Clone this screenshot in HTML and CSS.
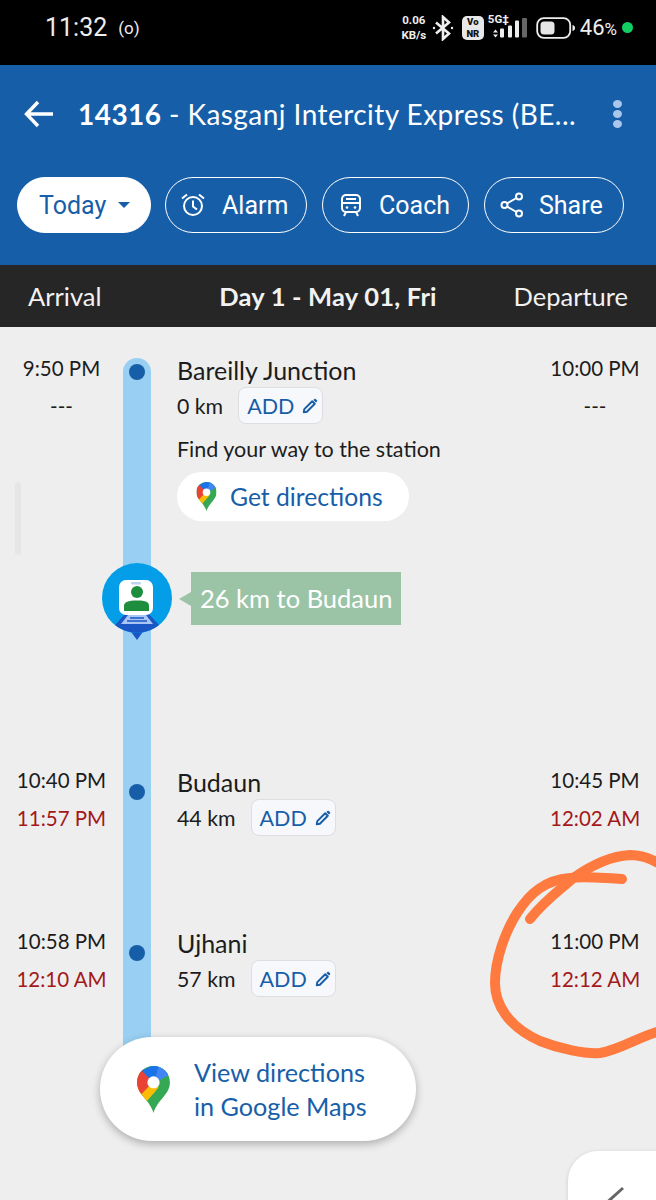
FILE: index.html
```html
<!DOCTYPE html>
<html lang="en">
<head>
  <meta charset="UTF-8">
  <meta name="viewport" content="width=device-width, initial-scale=1.0">
  <title>Train Running Status</title>
  <link rel="stylesheet" href="styles.css">
</head>
<body>

<svg class="defs" width="0" height="0">
  <defs>
    <clipPath id="pinClip">
      <path d="M35 0C15 0 0 15 0 35C0 47 6 56 14 66C23 77 31 86 35 100C39 86 47 77 56 66C64 56 70 47 70 35C70 15 55 0 35 0Z"/>
    </clipPath>
    <symbol id="mapsPin" viewBox="0 0 70 100">
      <g clip-path="url(#pinClip)">
        <rect width="70" height="100" fill="#34a853"/>
        <polygon points="0,50 24,24 46,46 18,78 0,78" fill="#fbbc04"/>
        <polygon points="0,0 14,8 34,34 9,60 0,50" fill="#ea4335"/>
        <polygon points="10,10 30,0 50,0 35,35" fill="#1a73e8"/>
        <polygon points="36,36 46,0 70,0 70,18" fill="#4285f4"/>
      </g>
      <circle cx="35" cy="35" r="13" fill="#fff"/>
    </symbol>
    <symbol id="pencil" viewBox="0 0 18 18">
      <path d="M2 16L2.600 12.500L11.500 3.600L14.400 6.500L5.500 15.400Z" fill="none" stroke="#175ea8" stroke-width="2.200" stroke-linejoin="round"/>
      <path d="M12.800 2.300L14 1.100C14.400 .7 15 .7 15.400 1.100L16.900 2.600C17.300 3 17.300 3.600 16.900 4L15.700 5.200Z" fill="#175ea8"/>
    </symbol>
  </defs>
</svg>

<!-- Status bar -->
<div class="status-bar">
  <div class="status-left">
    <span class="clock">11:32</span>
    <span class="hotspot">(o)</span>
  </div>
  <div class="status-right">
    <span class="net-speed">0.06<br>KB/s</span>
    <svg class="ic-bt" width="22" height="26" viewBox="0 0 22 26" fill="none" stroke="#eee" stroke-width="2.6">
      <path d="M4 7.500L17 18.500L11 24V2L17 7.500L4 18.500"/>
      <circle cx="2" cy="13" r="1.200" fill="#eee" stroke="none"/>
      <circle cx="20" cy="13" r="1.200" fill="#eee" stroke="none"/>
    </svg>
    <span class="vonr">Vo<br>NR</span>
    <div class="signal">
      <span class="five-g">5G‡</span>
      <svg class="bars" width="42" height="24" viewBox="0 0 42 24" fill="#eee">
        <path d="M6 14.500L8.500 11.500L11 14.500ZM6 16.500H11L8.500 19.500Z"/>
        <rect x="13" y="10.500" width="4" height="9" rx="1"/>
        <rect x="21" y="7.500" width="4" height="12" rx="1"/>
        <rect x="28" y="2.500" width="4" height="17" rx="1"/>
        <rect x="35" y="0" width="5" height="19.500" rx="1" fill="#666"/>
      </svg>
    </div>
    <svg class="ic-batt" width="40" height="22" viewBox="0 0 40 22">
      <rect x="1.200" y="1.200" width="33" height="19.600" rx="6.500" fill="none" stroke="#eee" stroke-width="1.800"/>
      <rect x="4.500" y="4.500" width="14" height="13" rx="3.500" fill="#e6e6e6"/>
      <path d="M36.500 8C38.500 8.600 39 9.600 39 11S38.500 13.400 36.500 14Z" fill="#eee"/>
    </svg>
    <span class="batt-pct">46<small>%</small></span>
    <span class="green-dot"></span>
  </div>
</div>

<!-- App bar -->
<div class="app-bar">
  <div class="title-row">
    <svg class="ic-back" width="30" height="28" viewBox="0 0 30 28" fill="none" stroke="#fff" stroke-width="3.400">
      <path d="M29 14H3M14 2L2.500 14L14 26"/>
    </svg>
    <div class="title"><b>14316</b> - Kasganj Intercity Express (BE...</div>
    <div class="dots"><span></span><span></span><span></span></div>
  </div>
  <div class="actions">
    <button class="pill pill-today">Today <i class="caret"></i></button>
    <button class="pill pill-alarm">
      <svg width="26" height="26" viewBox="0 0 26 26" fill="none" stroke="#fff" stroke-width="2">
        <circle cx="13" cy="14" r="9"/>
        <path d="M13 8.500V14.500L17 17.500M2 6.500L7 2.500M24 6.500L19 2.500"/>
      </svg>
      Alarm
    </button>
    <button class="pill pill-coach">
      <svg width="22" height="24" viewBox="0 0 22 24" fill="none" stroke="#fff" stroke-width="2">
        <rect x="2" y="2" width="18" height="17" rx="4"/>
        <path d="M2 10H20M6 6H16M6 19L4 23M16 19L18 23"/>
        <circle cx="7" cy="14.500" r="1.300" fill="#fff" stroke="none"/>
        <circle cx="15" cy="14.500" r="1.300" fill="#fff" stroke="none"/>
      </svg>
      Coach
    </button>
    <button class="pill pill-share">
      <svg width="24" height="26" viewBox="0 0 24 26" fill="none" stroke="#fff" stroke-width="2">
        <circle cx="19" cy="4.500" r="3"/>
        <circle cx="4.500" cy="13" r="3"/>
        <circle cx="19" cy="21.500" r="3"/>
        <path d="M16.500 6L7 11.500M7 14.500L16.500 20"/>
      </svg>
      Share
    </button>
  </div>
</div>

<!-- Day header -->
<div class="day-bar">
  <span>Arrival</span>
  <span class="day-label">Day 1 - May 01, Fri</span>
  <span class="day-right">Departure</span>
</div>

<!-- Timeline -->
<div class="timeline">
  <div class="rail"></div>
  <div class="scroll-thumb"></div>

  <div class="stop stop-first">
    <div class="times">
      <div>9:50 PM</div>
      <div>---</div>
    </div>
    <div class="rail-cell"><span class="dot"></span></div>
    <div class="station">
      <div class="station-name">Bareilly Junction</div>
      <div class="km-row">
        <span class="km">0 km</span>
        <span class="add-btn">ADD <svg width="16" height="16"><use href="#pencil"/></svg></span>
      </div>
      <div class="find-way">Find your way to the station</div>
      <div class="directions-btn">
        <svg width="21" height="29"><use href="#mapsPin"/></svg>
        Get directions
      </div>
    </div>
    <div class="times">
      <div>10:00 PM</div>
      <div>---</div>
    </div>
  </div>

  <!-- Live position -->
  <div class="progress">
    <svg class="train-marker" width="70" height="78" viewBox="0 0 70 78">
      <path d="M27 66H43L35 77Z" fill="#1a56c4"/>
      <circle cx="35" cy="35" r="35" fill="#049ee8"/>
      <path d="M13 62L24 50H46L57 62A35 35 0 0 1 13 62Z" fill="#1a56c4"/>
      <path d="M19 61L26 52H44L51 61Z" fill="#a9c5f5"/>
      <path d="M25 58H45M28 55H42" stroke="#1a56c4" stroke-width="1.500"/>
      <rect x="17" y="17" width="34" height="35" rx="7" fill="#fff"/>
      <rect x="29" y="19" width="10" height="2.500" rx="1.200" fill="#bcd4f0"/>
      <circle cx="35" cy="29" r="6" fill="#1e8e3e"/>
      <path d="M22 48V43C22 39 26 37.500 35 37.500S47 39 47 43V48Z" fill="#1e8e3e"/>
    </svg>
    <div class="distance-tag">26 km to Budaun</div>
  </div>

  <div class="stop">
    <div class="times">
      <div>10:40 PM</div>
      <div class="late">11:57 PM</div>
    </div>
    <div class="rail-cell"><span class="dot"></span></div>
    <div class="station">
      <div class="station-name">Budaun</div>
      <div class="km-row">
        <span class="km">44 km</span>
        <span class="add-btn">ADD <svg width="16" height="16"><use href="#pencil"/></svg></span>
      </div>
    </div>
    <div class="times">
      <div>10:45 PM</div>
      <div class="late">12:02 AM</div>
    </div>
  </div>

  <div class="stop">
    <div class="times">
      <div>10:58 PM</div>
      <div class="late">12:10 AM</div>
    </div>
    <div class="rail-cell"><span class="dot"></span></div>
    <div class="station">
      <div class="station-name">Ujhani</div>
      <div class="km-row">
        <span class="km">57 km</span>
        <span class="add-btn">ADD <svg width="16" height="16"><use href="#pencil"/></svg></span>
      </div>
    </div>
    <div class="times">
      <div>11:00 PM</div>
      <div class="late">12:12 AM</div>
    </div>
  </div>

  <!-- Floating buttons -->
  <div class="maps-btn">
    <svg width="33" height="47"><use href="#mapsPin"/></svg>
    <div>View directions<br>in Google Maps</div>
  </div>
  <div class="edit-fab">
    <svg width="40" height="40" viewBox="0 0 40 40" fill="none" stroke="#666" stroke-width="3"><path d="M5 22L25 4"/></svg>
  </div>
</div>

<!-- Marker scribble on the screenshot -->
<svg class="scribble" width="656" height="1200" viewBox="0 0 656 1200" fill="none" stroke="#ff7a3e" stroke-width="10" stroke-linecap="round" stroke-linejoin="round">
  <path d="M530 919C545 900 560 890 572 879C590 866 610 856 630 855C640 855 650 858 660 864"/>
  <path d="M622 879C600 878 585 876 570 878C545 880 530 893 517 913C505 932 495 960 495 983C495 1010 515 1030 540 1041C560 1049 585 1054 600 1053C620 1050 640 1036 660 1031"/>
</svg>

</body>
</html>
```

FILE: styles.css
```css
* { box-sizing: border-box; }
html, body { margin: 0; height: 1200px; overflow: hidden; }
body { font-family: Lato, "Noto Sans", sans-serif; background: #eeeeee; color: #1c1c1c; width: 656px; position: relative; }
.defs { position: absolute; }

/* Status bar */
.status-bar {
  height: 65px;
  background: #000;
  color: #eee;
  font-family: Roboto, sans-serif;
  display: flex;
  justify-content: space-between;
  align-items: center;
  padding: 0 23px 10px 45px;
}
.status-left { display: flex; align-items: center; gap: 11px; }
.clock { font-size: 25px; }
.hotspot { font-size: 17px; }
.status-right { display: flex; align-items: center; }
.net-speed { font-size: 11.5px; font-weight: 700; line-height: 15px; width: 26px; text-align: center; margin-right: 5px; }
.ic-bt { margin-right: 8px; }
.vonr {
  width: 22px;
  height: 24px;
  background: #e8e8e8;
  color: #111;
  border-radius: 5px;
  font-size: 9.5px;
  font-weight: 900;
  line-height: 11.5px;
  text-align: center;
  padding-top: 0.5px;
  margin-right: 3px;
}
.signal { width: 42px; height: 28px; position: relative; margin-right: 7px; }
.five-g { position: absolute; top: -2px; left: 1px; font-size: 11.5px; font-weight: 700; }
.bars { position: absolute; left: 0; top: 4px; }
.ic-batt { margin-right: 4px; }
.batt-pct { font-size: 22px; }
.batt-pct small { font-size: 17px; }
.green-dot { width: 11px; height: 11px; border-radius: 50%; background: #12cf63; margin-left: 5px; }

/* App bar */
.app-bar { height: 200px; background: #175ea8; padding: 0 17px; }
.title-row { height: 98px; display: flex; align-items: center; padding: 0 0 0 7px; color: #fff; }
.title { font-size: 28px; letter-spacing: .45px; margin-left: 24px; white-space: nowrap; flex: 1; }
.title b { font-weight: 700; }
.dots { display: flex; flex-direction: column; gap: 2px; margin-right: 17px; }
.dots span { width: 9px; height: 8px; border-radius: 50%; background: #a9c7ea; }
.actions { display: flex; gap: 15px; margin-top: 14px; }
.pill {
  height: 56px;
  border: 1.5px solid #fff;
  border-radius: 28px;
  background: transparent;
  color: #fff;
  font-family: Roboto, sans-serif;
  font-size: 25px;
  display: flex;
  align-items: center;
  padding: 0;
}
.pill-today { width: 134px; background: #fff; color: #175ea8; gap: 12px; padding-left: 21px; }
.pill-alarm { width: 142px; gap: 16px; padding-left: 14px; margin-left: -1px; }
.pill-coach { width: 147px; gap: 17px; padding-left: 17px; }
.pill-share { width: 140px; gap: 15px; padding-left: 15px; }
.caret { width: 0; height: 0; border-left: 6.5px solid transparent; border-right: 6.5px solid transparent; border-top: 6.5px solid #175ea8; }

/* Day header */
.day-bar {
  height: 62px;
  background: #262626;
  color: #f2f2f2;
  font-size: 25.5px;
  display: grid;
  grid-template-columns: 1fr auto 1fr;
  align-items: center;
  padding: 0 28px;
}
.day-label { font-weight: 700; letter-spacing: .2px; }
.day-right { text-align: right; }

/* Timeline */
.timeline { position: relative; height: 873px; padding-top: 31px; }
.rail { position: absolute; left: 123px; top: 31px; width: 28px; height: 700px; border-radius: 14px 14px 0 0; background: #99cff2; }
.scroll-thumb { position: absolute; left: 15px; top: 155px; width: 6px; height: 73px; background: #e6e6e6; border-radius: 3px; }
.stop { display: grid; grid-template-columns: 123px 28px 1fr 90px; height: 161px; padding-right: 16px; position: relative; }
.stop-first { height: auto; }
.times { font-size: 20.5px; text-align: center; white-space: nowrap; line-height: 38px; margin-top: -9px; }
.late { color: #a31919; }
.rail-cell { display: flex; justify-content: center; align-items: flex-start; padding-top: 15px; margin-top: -1px; }
.stop-first .rail-cell { padding-top: 7px; }
.dot { width: 16px; height: 16px; border-radius: 50%; background: #175ea8; }
.station { padding-left: 26px; margin-top: -2px; }
.station-name { font-size: 25px; line-height: 28px; }
.km-row { display: flex; align-items: center; gap: 15px; margin-top: 3px; height: 37px; }
.km { font-size: 21.3px; }
.add-btn {
  height: 37px;
  padding: 0 4px 0 8px;
  display: flex;
  align-items: center;
  gap: 8px;
  font-size: 21.5px;
  color: #175ea8;
  background: #f7f8fb;
  border: 1.5px solid #dddde2;
  border-radius: 8px;
}
.find-way { font-size: 21.5px; margin-top: 12px; line-height: 26px; }
.directions-btn {
  width: 232px;
  height: 49px;
  margin-top: 10px;
  display: flex;
  align-items: center;
  gap: 13px;
  padding-left: 19px;
  background: #fff;
  border-radius: 25px;
  color: #175ea8;
  font-size: 24.7px;
}

/* Live position */
.progress { position: relative; margin: 51px 0 145px 191px; }
.train-marker { position: absolute; left: -89px; top: -9px; }
.distance-tag {
  position: relative;
  width: 210px;
  height: 53px;
  line-height: 53px;
  padding-left: 9px;
  background: #9bc4a6;
  color: #fff;
  font-size: 25.5px;
  white-space: nowrap;
}
.distance-tag::before {
  content: "";
  position: absolute;
  left: -12px;
  top: 20px;
  border-top: 7px solid transparent;
  border-bottom: 7px solid transparent;
  border-right: 12px solid #9bc4a6;
}

/* Floating buttons */
.maps-btn {
  position: absolute;
  left: 100px;
  top: 710px;
  width: 316px;
  height: 104px;
  display: flex;
  align-items: center;
  gap: 24px;
  padding-left: 37px;
  background: #fff;
  border-radius: 52px;
  box-shadow: 0 3px 8px rgba(0,0,0,0.28);
  color: #175ea8;
  font-size: 25.2px;
  line-height: 34px;
}
.edit-fab { position: absolute; left: 568px; top: 824px; width: 120px; height: 100px; padding: 33px 0 0 30px; background: #fff; border-radius: 30px; box-shadow: 0 1px 4px rgba(0,0,0,0.15); }

.scribble { position: absolute; left: 0; top: 0; pointer-events: none; }
```
